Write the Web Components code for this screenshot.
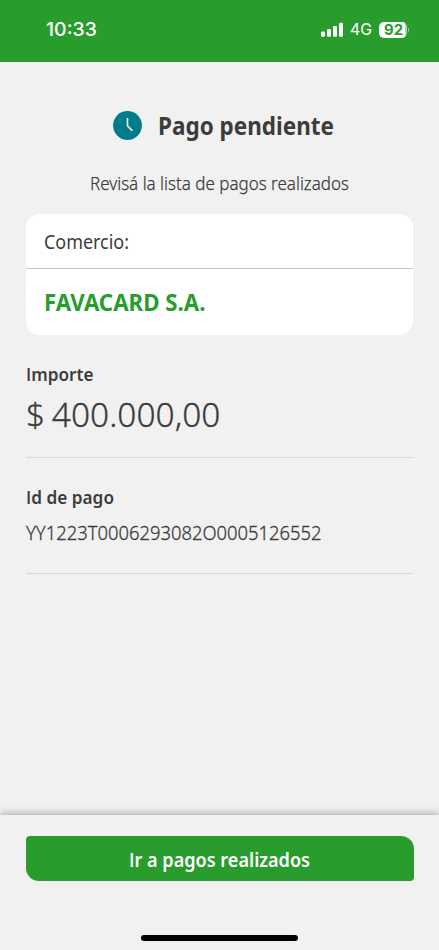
<!DOCTYPE html>
<html lang="es"><head><meta charset="utf-8"><title>Pago pendiente</title>
<style>html,body{margin:0;height:100%}body{background:#f1f1f1;color:#3c3c3c;font-family:"Noto Sans","Open Sans",sans-serif;overflow:hidden}</style></head>
<body><payment-page></payment-page>
<script>
class Base extends HTMLElement{
  constructor(){super();this.attachShadow({mode:'open'}).innerHTML=this.constructor.html}
}
// One line of text, condensed horizontally to the width given in the "fit" attribute.
// "plain-i" sets the first letter in a face whose capital I has no serifs.
class FitText extends Base{
  static html=`<style>:host{display:block;white-space:nowrap}span{display:inline-block;transform-origin:0 50%}:host([plain-i]) span::first-letter{font-family:"Open Sans",sans-serif}</style><span><slot></slot></span>`;
  connectedCallback(){
    const s=this.shadowRoot.querySelector('span'),w=+this.getAttribute('fit');
    this.style.width=w+'px';
    s.style.transform='scaleX('+w/s.getBoundingClientRect().width+')';
  }
}
class StatusBar extends Base{
  static html=`<style>:host{display:flex;box-sizing:border-box;height:62px;padding:0 29px 3px 46px;background:#289d2e;color:#fff;font-family:Inter,sans-serif;align-items:center;justify-content:space-between}
  .t{font-size:18.7px;font-weight:550;line-height:24px}.r{display:flex;align-items:center}.n{font-size:16px;font-weight:400;line-height:24px;margin:0 7px 1px 7px}
  .b{width:28px;height:16px;border-radius:5px;background:linear-gradient(90deg,#fff 93%,#a6d6a9 93%);font-size:14px;font-weight:700;line-height:16px;display:flex;justify-content:center}
  .b fit-text{color:#289d2e}
  svg{display:block}</style>
  <fit-text class="t" fit="51">10:33</fit-text><div class="r">
  <svg width="22" height="16" viewBox="0 0 22 16" fill="#fff"><rect y="9.5" width="4" height="5.2" rx="1.2"/><rect x="6" y="7" width="4" height="7.7" rx="1.2"/><rect x="12" y="4" width="4" height="10.7" rx="1.2"/><rect x="18" y=".8" width="4" height="13.9" rx="1.2"/></svg>
  <fit-text class="n" fit="22">4G</fit-text><div class="b"><fit-text fit="19">92</fit-text></div>
  <svg width="3" height="8"><path d="M1 1.5Q3 4 1 6.5Z" fill="#a6d6a9"/></svg></div>`;
}
class ClockIcon extends Base{
  static html=`<style>:host,svg{display:block}</style><svg width="29" height="29" viewBox="0 0 29 29"><circle cx="14.5" cy="14.5" r="14.4" fill="#007d89"/><path d="M14.5 7v7.8l4.9 5" fill="none" stroke="#e9f5f5" stroke-width="1.6"/></svg>`;
}
class MerchantCard extends Base{
  static html=`<style>:host{display:block;height:121px;border-radius:14px;background:#fff;overflow:hidden}
  div{display:flex;align-items:center;padding-left:17.5px;box-sizing:border-box}.a{height:55px;border-bottom:1px solid #c4c4c4;font-size:19.5px}.b{height:66px;color:#289d2e;font-size:22.3px;font-weight:700}</style>
  <div class="a"><slot name="label"></slot></div><div class="b"><slot></slot></div>`;
}
class DetailRow extends Base{
  static html=`<style>:host{display:block;border-bottom:1px solid #d8d8d8;box-sizing:border-box}.l{font-size:18.3px;font-weight:600;line-height:24px}.v{font-weight:300;-webkit-text-stroke:.3px currentColor}</style>
  <div class="l"><slot name="label"></slot></div><div class="v"><slot></slot></div>`;
}
class ActionButton extends Base{
  static html=`<style>button{all:unset;display:flex;width:100%;height:45px;align-items:center;justify-content:center;background:#289d2e;color:#fff;border-radius:4px 13px 4px 13px;font-size:19px;font-weight:600;box-sizing:border-box;padding-top:2.5px}:host{display:block}</style><button><slot></slot></button>`;
}
class PaymentPage extends Base{
  static html=`<style>
  :host{display:flex;flex-direction:column;height:950px;width:439px}
  main{flex:1;padding:0 26px}
  .h{display:flex;justify-content:center;align-items:center;gap:16px;margin-top:43px;height:40px;padding-left:7px}
  .h fit-text{font-size:24.4px;font-weight:700}
  .sub{font-size:18.4px;font-weight:300;-webkit-text-stroke:.25px currentColor;line-height:26px;margin:25px 0 18px 63.5px}
  .i{margin-top:27px;height:96px}.i .v{font-size:33.5px;line-height:46px;margin-top:5px;word-spacing:-2px}
  .d{margin-top:28px;height:89px}.d fit-text[slot]{margin-top:-1px}.d .v{font-size:19.4px;line-height:30px;margin-top:9px}
  footer{height:135px;box-sizing:border-box;padding:21px 25.5px 9px;display:flex;flex-direction:column;justify-content:space-between;background:#f1f1f1;box-shadow:0 -2px 7px #00000045}
  .home{width:157px;height:6px;border-radius:3px;background:#000;align-self:center}
  </style><status-bar></status-bar><main>
  <div class="h"><clock-icon></clock-icon><fit-text fit="176">Pago pendiente</fit-text></div>
  <fit-text class="sub" fit="259">Revisá la lista de pagos realizados</fit-text>
  <merchant-card><fit-text slot="label" fit="85">Comercio:</fit-text><fit-text fit="161.5">FAVACARD S.A.</fit-text></merchant-card>
  <detail-row class="i"><fit-text slot="label" fit="67.5" plain-i>Importe</fit-text><fit-text class="v" fit="194.5">$ 400.000,00</fit-text></detail-row>
  <detail-row class="d"><fit-text slot="label" fit="88" plain-i>Id de pago</fit-text><fit-text class="v" fit="295.5">YY1223T0006293082O0005126552</fit-text></detail-row>
  </main><footer><action-button><fit-text fit="181" plain-i>Ir a pagos realizados</fit-text></action-button><div class="home"></div></footer>`;
}
for(const [n,c] of [['status-bar',StatusBar],['clock-icon',ClockIcon],['merchant-card',MerchantCard],['detail-row',DetailRow],['action-button',ActionButton],['payment-page',PaymentPage],['fit-text',FitText]])customElements.define(n,c);
</script></body></html>
